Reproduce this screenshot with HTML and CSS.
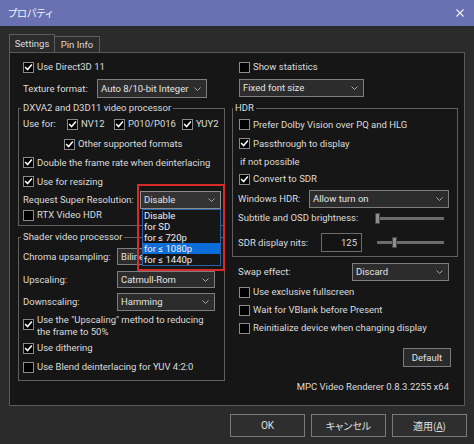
FILE: index.html
```html
<!DOCTYPE html>
<html>
<head>
<meta charset="utf-8">
<link rel="stylesheet" href="styles.css">
</head>
<body>
<div class="titlebar">
  <span class="title jp">プロパティ</span>
  <svg class="close" viewBox="0 0 8 8"><path d="M0.5 0.5 L7.5 7.5 M7.5 0.5 L0.5 7.5" stroke="#f2f2f6" stroke-width="1.1" fill="none"/></svg>
</div>
<div class="dialog">
  <div class="tabs">
    <div class="tab tab-settings active">Settings</div>
    <div class="tab tab-pin">Pin Info</div>
  </div>
  <div class="panel">
    <div class="col col-left">
      <div class="row h18 outer"><span class="cb on"><svg viewBox="0 0 11 11"><polyline points="2,5.6 4.4,8 9,2.6"/></svg></span><span>Use Direct3D 11</span></div>
      <div class="row h19 mt3 outer"><span class="lbl w74">Texture format:</span><div class="sel w110 h19"><span>Auto 8/10-bit Integer</span><svg class="chev" viewBox="0 0 7 4"><polyline points="0.5,0.5 3.5,3.5 6.5,0.5"/></svg></div></div>
      <fieldset class="grp grp-left mt3">
        <legend>DXVA2 and D3D11 video processor</legend>
        <div class="row h18">
          <span class="lbl w44">Use for:</span>
          <span class="item w47"><span class="cb on"><svg viewBox="0 0 11 11"><polyline points="2,5.6 4.4,8 9,2.6"/></svg></span>NV12</span>
          <span class="item w68"><span class="cb on"><svg viewBox="0 0 11 11"><polyline points="2,5.6 4.4,8 9,2.6"/></svg></span>P010/P016</span>
          <span class="item"><span class="cb on"><svg viewBox="0 0 11 11"><polyline points="2,5.6 4.4,8 9,2.6"/></svg></span>YUY2</span>
        </div>
        <div class="row h18 mt2 indent41"><span class="cb on"><svg viewBox="0 0 11 11"><polyline points="2,5.6 4.4,8 9,2.6"/></svg></span><span>Other supported formats</span></div>
        <div class="row h19"><span class="cb on"><svg viewBox="0 0 11 11"><polyline points="2,5.6 4.4,8 9,2.6"/></svg></span><span>Double the frame rate when deinterlacing</span></div>
        <div class="row h19"><span class="cb on"><svg viewBox="0 0 11 11"><polyline points="2,5.6 4.4,8 9,2.6"/></svg></span><span>Use for resizing</span></div>
        <div class="row h18">
          <span class="lbl w117">Request Super Resolution:</span>
          <div class="sr-wrap">
            <div class="sel w81 h18 sel-open"><span>Disable</span><svg class="chev" viewBox="0 0 7 4"><polyline points="0.5,0.5 3.5,3.5 6.5,0.5"/></svg></div>
            <ul class="droplist">
              <li>Disable</li>
              <li>for SD</li>
              <li>for ≤ 720p</li>
              <li class="hl">for ≤ 1080p</li>
              <li>for ≤ 1440p</li>
            </ul>
            <div class="redbox"></div>
          </div>
        </div>
        <div class="row h12"><span class="cb"></span><span>RTX Video HDR</span></div>
      </fieldset>
      <fieldset class="grp grp-left mt4">
        <legend>Shader video processor</legend>
        <div class="row h17 mt4"><span class="lbl w94">Chroma upsampling:</span><div class="sel w98 h17"><span class="clip">Bilinear</span><svg class="chev" viewBox="0 0 7 4"><polyline points="0.5,0.5 3.5,3.5 6.5,0.5"/></svg></div></div>
        <div class="row h17 mt6"><span class="lbl w94">Upscaling:</span><div class="sel w98 h17"><span>Catmull-Rom</span><svg class="chev" viewBox="0 0 7 4"><polyline points="0.5,0.5 3.5,3.5 6.5,0.5"/></svg></div></div>
        <div class="row h18 mt5"><span class="lbl w94">Downscaling:</span><div class="sel w98 h18"><span>Hamming</span><svg class="chev" viewBox="0 0 7 4"><polyline points="0.5,0.5 3.5,3.5 6.5,0.5"/></svg></div></div>
        <div class="row h26 mt3 top"><span class="cb on cb-top"><svg viewBox="0 0 11 11"><polyline points="2,5.6 4.4,8 9,2.6"/></svg></span><span>Use the &quot;Upscaling&quot; method to reducing<br>the frame to 50%</span></div>
        <div class="row h16"><span class="cb on"><svg viewBox="0 0 11 11"><polyline points="2,5.6 4.4,8 9,2.6"/></svg></span><span>Use dithering</span></div>
        <div class="row h18 mt2"><span class="cb"></span><span>Use Blend deinterlacing for YUV 4:2:0</span></div>
      </fieldset>
    </div>
    <div class="col col-right">
      <div class="row h18 outer"><span class="cb"></span><span>Show statistics</span></div>
      <div class="row h18 mt3 outer"><div class="sel w125 h18 ml1"><span>Fixed font size</span><svg class="chev" viewBox="0 0 7 4"><polyline points="0.5,0.5 3.5,3.5 6.5,0.5"/></svg></div></div>
      <fieldset class="grp grp-right mt4">
        <legend>HDR</legend>
        <div class="row h19"><span class="cb"></span><span>Prefer Dolby Vision over PQ and HLG</span></div>
        <div class="row h19"><span class="cb on"><svg viewBox="0 0 11 11"><polyline points="2,5.6 4.4,8 9,2.6"/></svg></span><span>Passthrough to display</span></div>
        <div class="row h17 ml2"><span>if not possible</span></div>
        <div class="row h18"><span class="cb on"><svg viewBox="0 0 11 11"><polyline points="2,5.6 4.4,8 9,2.6"/></svg></span><span>Convert to SDR</span></div>
        <div class="row h18 mt2"><span class="lbl w71">Windows HDR:</span><div class="sel w140 h18"><span>Allow turn on</span><svg class="chev" viewBox="0 0 7 4"><polyline points="0.5,0.5 3.5,3.5 6.5,0.5"/></svg></div></div>
        <div class="row h20"><span class="lbl w137">Subtitle and OSD brightness:</span><div class="slider"><div class="track"></div><div class="thumb" style="left:0px"></div></div></div>
        <div class="row h19 mt5"><span class="lbl w83">SDR display nits:</span><div class="edit">125</div><div class="slider ml13"><div class="track"></div><div class="thumb" style="left:17px"></div></div></div>
      </fieldset>
      <div class="row h18 mt6 outer"><span class="lbl w114">Swap effect:</span><div class="sel w97 h18"><span>Discard</span><svg class="chev" viewBox="0 0 7 4"><polyline points="0.5,0.5 3.5,3.5 6.5,0.5"/></svg></div></div>
      <div class="row h18 mt2 outer"><span class="cb"></span><span>Use exclusive fullscreen</span></div>
      <div class="row h18 outer"><span class="cb"></span><span>Wait for VBlank before Present</span></div>
      <div class="row h18 outer"><span class="cb"></span><span>Reinitialize device when changing display</span></div>
      <div class="btn btn-default">Default</div>
      <div class="version">MPC Video Renderer 0.8.3.2255 x64</div>
    </div>
  </div>
  <div class="buttons">
    <div class="btn btn-main">OK</div>
    <div class="btn btn-main jp">キャンセル</div>
    <div class="btn btn-main jp">適用(<u>A</u>)</div>
  </div>
</div>
</body>
</html>
```

FILE: styles.css
```css
* { box-sizing: border-box; }
html, body { margin: 0; padding: 0; }
body {
  width: 474px;
  height: 444px;
  overflow: hidden;
  background: #2b2b2b;
  font-family: Roboto, "Noto Sans CJK JP", sans-serif;
  font-size: 9.5px;
  line-height: 12px;
  color: #dcdcdc;
}
.jp {
  font-family: "Noto Sans CJK JP", sans-serif;
  font-feature-settings: "palt";
}
.titlebar {
  height: 26px;
  background: #6971b3;
  display: flex;
  align-items: center;
  justify-content: space-between;
  padding: 0 10px 0 8px;
}
.title { font-size: 10px; color: #f4f4f8; }
.close { width: 8px; height: 8px; display: block; }

.dialog { padding: 8px 7px 0 9px; }

.tabs { display: flex; height: 18px; align-items: flex-end; }
.tab {
  height: 16px;
  border: 1px solid #5e5e5e;
  border-bottom: none;
  background: #2b2b2b;
  display: flex;
  align-items: center;
  justify-content: center;
}
.tab.active { height: 18px; }
.tab-settings { width: 46px; }
.tab-pin { width: 46px; margin-left: -1px; }

.panel {
  width: 456px;
  height: 354px;
  border: 1px solid #5a5a5a;
  background: #161616;
  display: flex;
  gap: 7px;
  padding: 5px 6px 0 8px;
}
.col { display: flex; flex-direction: column; }
.col-left { width: 207px; }
.col-right { width: 226px; }

.row { display: flex; align-items: center; flex-shrink: 0; white-space: nowrap; }
.row.top { align-items: flex-start; }
.col-left .outer { padding-left: 5px; }
.col-right .outer { padding-left: 6px; }
.col-right .cb { margin-left: 1px; }

.h12 { height: 12px; }
.h16 { height: 16px; }
.h17 { height: 17px; }
.h18 { height: 18px; }
.h19 { height: 19px; }
.h20 { height: 20px; }
.h26 { height: 26px; }
.mt2 { margin-top: 2px; }
.mt3 { margin-top: 3px; }
.mt4 { margin-top: 4px; }
.mt5 { margin-top: 5px; }
.mt6 { margin-top: 6px; }
.ml1 { margin-left: 1px; }
.ml2 { margin-left: 2px; }
.ml13 { margin-left: 13px; }
.indent41 { padding-left: 41px; }

.lbl { flex-shrink: 0; }
.w44 { width: 44px; }
.w47 { width: 47px; }
.w68 { width: 68px; }
.w71 { width: 71px; }
.w74 { width: 74px; }
.w81 { width: 81px; }
.w83 { width: 83px; }
.w94 { width: 94px; }
.w97 { width: 97px; }
.w98 { width: 98px; }
.w110 { width: 110px; }
.w114 { width: 114px; }
.w117 { width: 117px; }
.w125 { width: 125px; }
.w137 { width: 137px; }
.w140 { width: 140px; }

.item { display: flex; align-items: center; flex-shrink: 0; }

.cb {
  width: 11px;
  height: 11px;
  flex-shrink: 0;
  border: 1px solid #8a8a8a;
  background: #000;
  margin-right: 3px;
  display: flex;
  align-items: center;
  justify-content: center;
}
.cb svg { width: 9px; height: 9px; display: block; }
.cb polyline { fill: none; stroke: #fafafa; stroke-width: 1.9; stroke-linecap: square; }
.cb-top { margin-top: 5px; }

.grp {
  margin-left: 0;
  margin-right: 0;
  margin-bottom: 0;
  border: 1px solid #606060;
  min-width: 0;
  flex-shrink: 0;
}
.grp-left { padding: 0 4px 4px 4px; }
.grp-left legend { margin-left: -2px; }
.grp-right { padding: 0 7px 4px 5px; }
.grp-right legend { margin-left: -5px; }
legend { padding: 0 2px; line-height: 14px; height: 14px; }

.sel {
  position: relative;
  flex-shrink: 0;
  border: 1px solid #7e7e7e;
  background: #2c2c2c;
  padding-left: 3px;
  display: flex;
  align-items: center;
  overflow: hidden;
  color: #e4e4e4;
}
.sel .clip { display: block; width: 21px; overflow: hidden; white-space: nowrap; }
.chev {
  position: absolute;
  right: 5px;
  top: 50%;
  margin-top: -2px;
  width: 7px;
  height: 4px;
}
.chev polyline { fill: none; stroke: #a8a8a8; stroke-width: 1; }
.sel-open { border-color: #8c8c8c; background: #333; }

.sr-wrap { position: relative; z-index: 5; }
.droplist {
  position: absolute;
  left: 2px;
  top: 18px;
  width: 79px;
  margin: 0;
  padding: 0;
  list-style: none;
  border: 1px solid #2a62a8;
  background: #161616;
}
.droplist li { height: 11px; line-height: 11px; padding-left: 1px; color: #f0f0f0; white-space: nowrap; }
.droplist li.hl { background: #0b6ed8; }
.redbox {
  position: absolute;
  left: -3px;
  top: -7px;
  width: 88px;
  height: 87px;
  border: 2px solid #d62b2b;
}

.slider { position: relative; width: 69px; height: 11px; flex-shrink: 0; }
.slider .track { position: absolute; left: 2px; right: 0; top: 4px; height: 3px; background: #6c6c6c; }
.slider .thumb { position: absolute; top: 0; width: 5px; height: 11px; background: #8e8e8e; border: 1px solid #454545; }

.edit {
  width: 41px;
  height: 19px;
  flex-shrink: 0;
  border: 1px solid #6c6c6c;
  background: #141414;
  text-align: right;
  padding-right: 4px;
  line-height: 17px;
}

.btn {
  border: 1px solid #7a7a7a;
  background: #2e2e2e;
  display: flex;
  align-items: center;
  justify-content: center;
  color: #e0e0e0;
  flex-shrink: 0;
}
.btn-default {
  align-self: flex-end;
  width: 48px;
  height: 19px;
  margin-top: 11px;
  margin-right: 7px;
  background: #2a2a2a;
}
.version {
  align-self: flex-end;
  margin-top: 13px;
  margin-right: 9px;
  height: 14px;
  line-height: 14px;
  white-space: nowrap;
}

.buttons { display: flex; justify-content: flex-end; gap: 6px; margin-top: 8px; }
.btn-main { width: 75px; height: 23px; font-size: 10px; }
```
